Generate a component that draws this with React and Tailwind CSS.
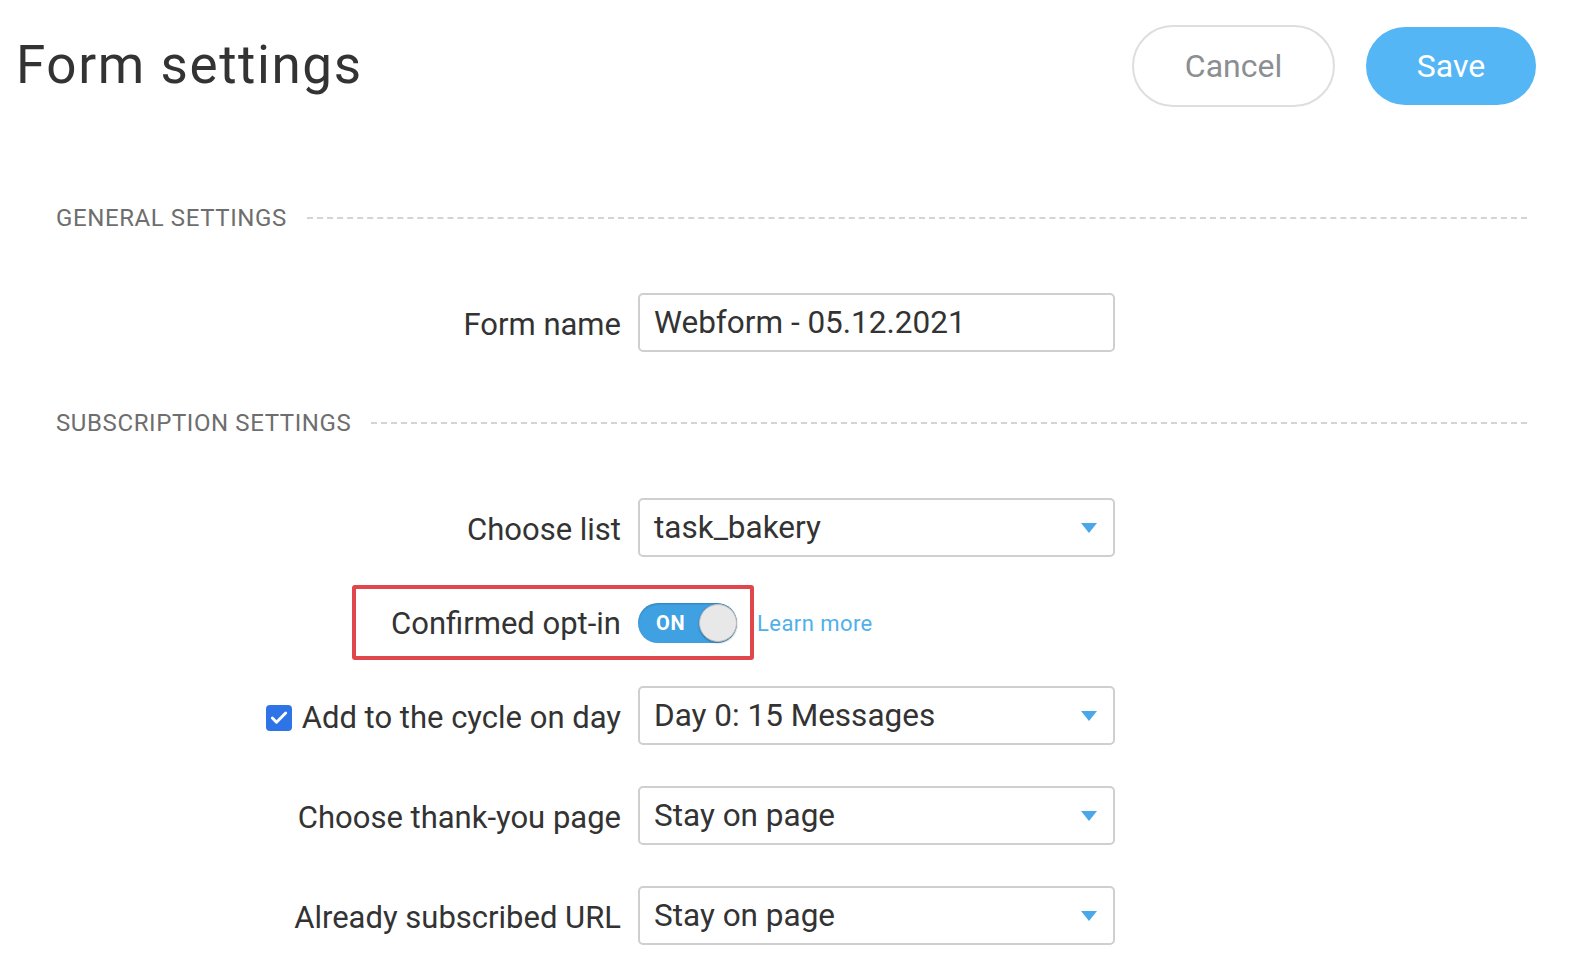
import { Check } from "lucide-react";

function Caret() {
  return (
    <svg width="16" height="10" viewBox="0 0 16 10" aria-hidden="true">
      <path d="M0 0 L16 0 L8 10 Z" fill="#4aa8e8" />
    </svg>
  );
}

function SectionTitle({ children }) {
  return (
    <div className="flex items-center pl-[56px] pr-[47px]">
      <span className="text-[24px] uppercase tracking-[0.025em] text-[#6e6e6e] leading-[28px]">
        {children}
      </span>
      <div className="ml-[20px] flex-1 border-t-2 border-dashed border-[#d4d4d4]" />
    </div>
  );
}

function Row({ label, children, className = "" }) {
  return (
    <div className={`flex items-center ${className}`}>
      <div className="flex w-[621px] items-center justify-end pt-[5px] text-[31px] text-[#333]">
        {label}
      </div>
      <div className="ml-[17px] flex items-center">{children}</div>
    </div>
  );
}

function Select({ value }) {
  return (
    <div className="flex h-[59px] w-[477px] items-center justify-between rounded-[5px] border-2 border-[#cfcfcf] pl-[14px] pr-[16px] text-[31.5px] text-[#333]">
      <span>{value}</span>
      <Caret />
    </div>
  );
}

export default function App() {
  return (
    <div className="h-screen overflow-hidden bg-white font-['Roboto',sans-serif]">
      <header className="flex items-center justify-between pl-[16px] pr-[38px] pt-[25px]">
        <h1 className="text-[53px] font-normal tracking-[0.03em] text-[#333]">Form settings</h1>
        <div className="flex items-center gap-[31px]">
          <button className="h-[82px] w-[203px] rounded-full border-2 border-[#dedede] text-[32px] text-[#8b8e92]">
            Cancel
          </button>
          <button className="h-[78px] w-[170px] rounded-full bg-[#55b6f6] text-[32px] text-white">
            Save
          </button>
        </div>
      </header>

      <div className="mt-[97px]">
        <SectionTitle>General settings</SectionTitle>
      </div>

      <Row label="Form name" className="mt-[61px]">
        <div className="flex h-[59px] w-[477px] items-center rounded-[5px] border-2 border-[#cfcfcf] pl-[14px] text-[31.5px] text-[#333]">
          Webform - 05.12.2021
        </div>
      </Row>

      <div className="mt-[57px]">
        <SectionTitle>Subscription settings</SectionTitle>
      </div>

      <Row label="Choose list" className="mt-[61px]">
        <Select value="task_bakery" />
      </Row>

      <div className="relative mt-[28px] flex h-[75px] items-center">
        <div className="absolute left-[352px] top-0 h-[75px] w-[402px] rounded-[3px] border-4 border-[#e0464c]" />
        <div className="flex w-[621px] justify-end pt-[4px] text-[31px] text-[#333]">Confirmed opt-in</div>
        <div className="ml-[17px] flex h-[40px] w-[99px] items-center rounded-full bg-[#3fa0e2] pl-[18px] shadow-[inset_0_1px_2px_rgba(0,0,0,0.2)]">
          <span className="text-[20px] font-bold tracking-[0.04em] text-white">ON</span>
          <div className="ml-auto h-[38px] w-[38px] rounded-full border border-[#bdbdbd] bg-[#e8e8e8] shadow-[0_1px_2px_rgba(0,0,0,0.3)]" />
        </div>
        <a className="ml-[20px] pt-[2px] text-[22px] tracking-[0.02em] text-[#4fb0ea]">Learn more</a>
      </div>

      <Row
        className="mt-[26px]"
        label={
          <>
            <span className="mr-[10px] flex h-[26px] w-[26px] items-center justify-center rounded-[4px] bg-[#2f74e6]">
              <Check size={20} strokeWidth={3.5} color="white" />
            </span>
            Add to the cycle on day
          </>
        }
      >
        <Select value="Day 0: 15 Messages" />
      </Row>

      <Row label="Choose thank-you page" className="mt-[41px]">
        <Select value="Stay on page" />
      </Row>

      <Row label="Already subscribed URL" className="mt-[41px]">
        <Select value="Stay on page" />
      </Row>
    </div>
  );
}
